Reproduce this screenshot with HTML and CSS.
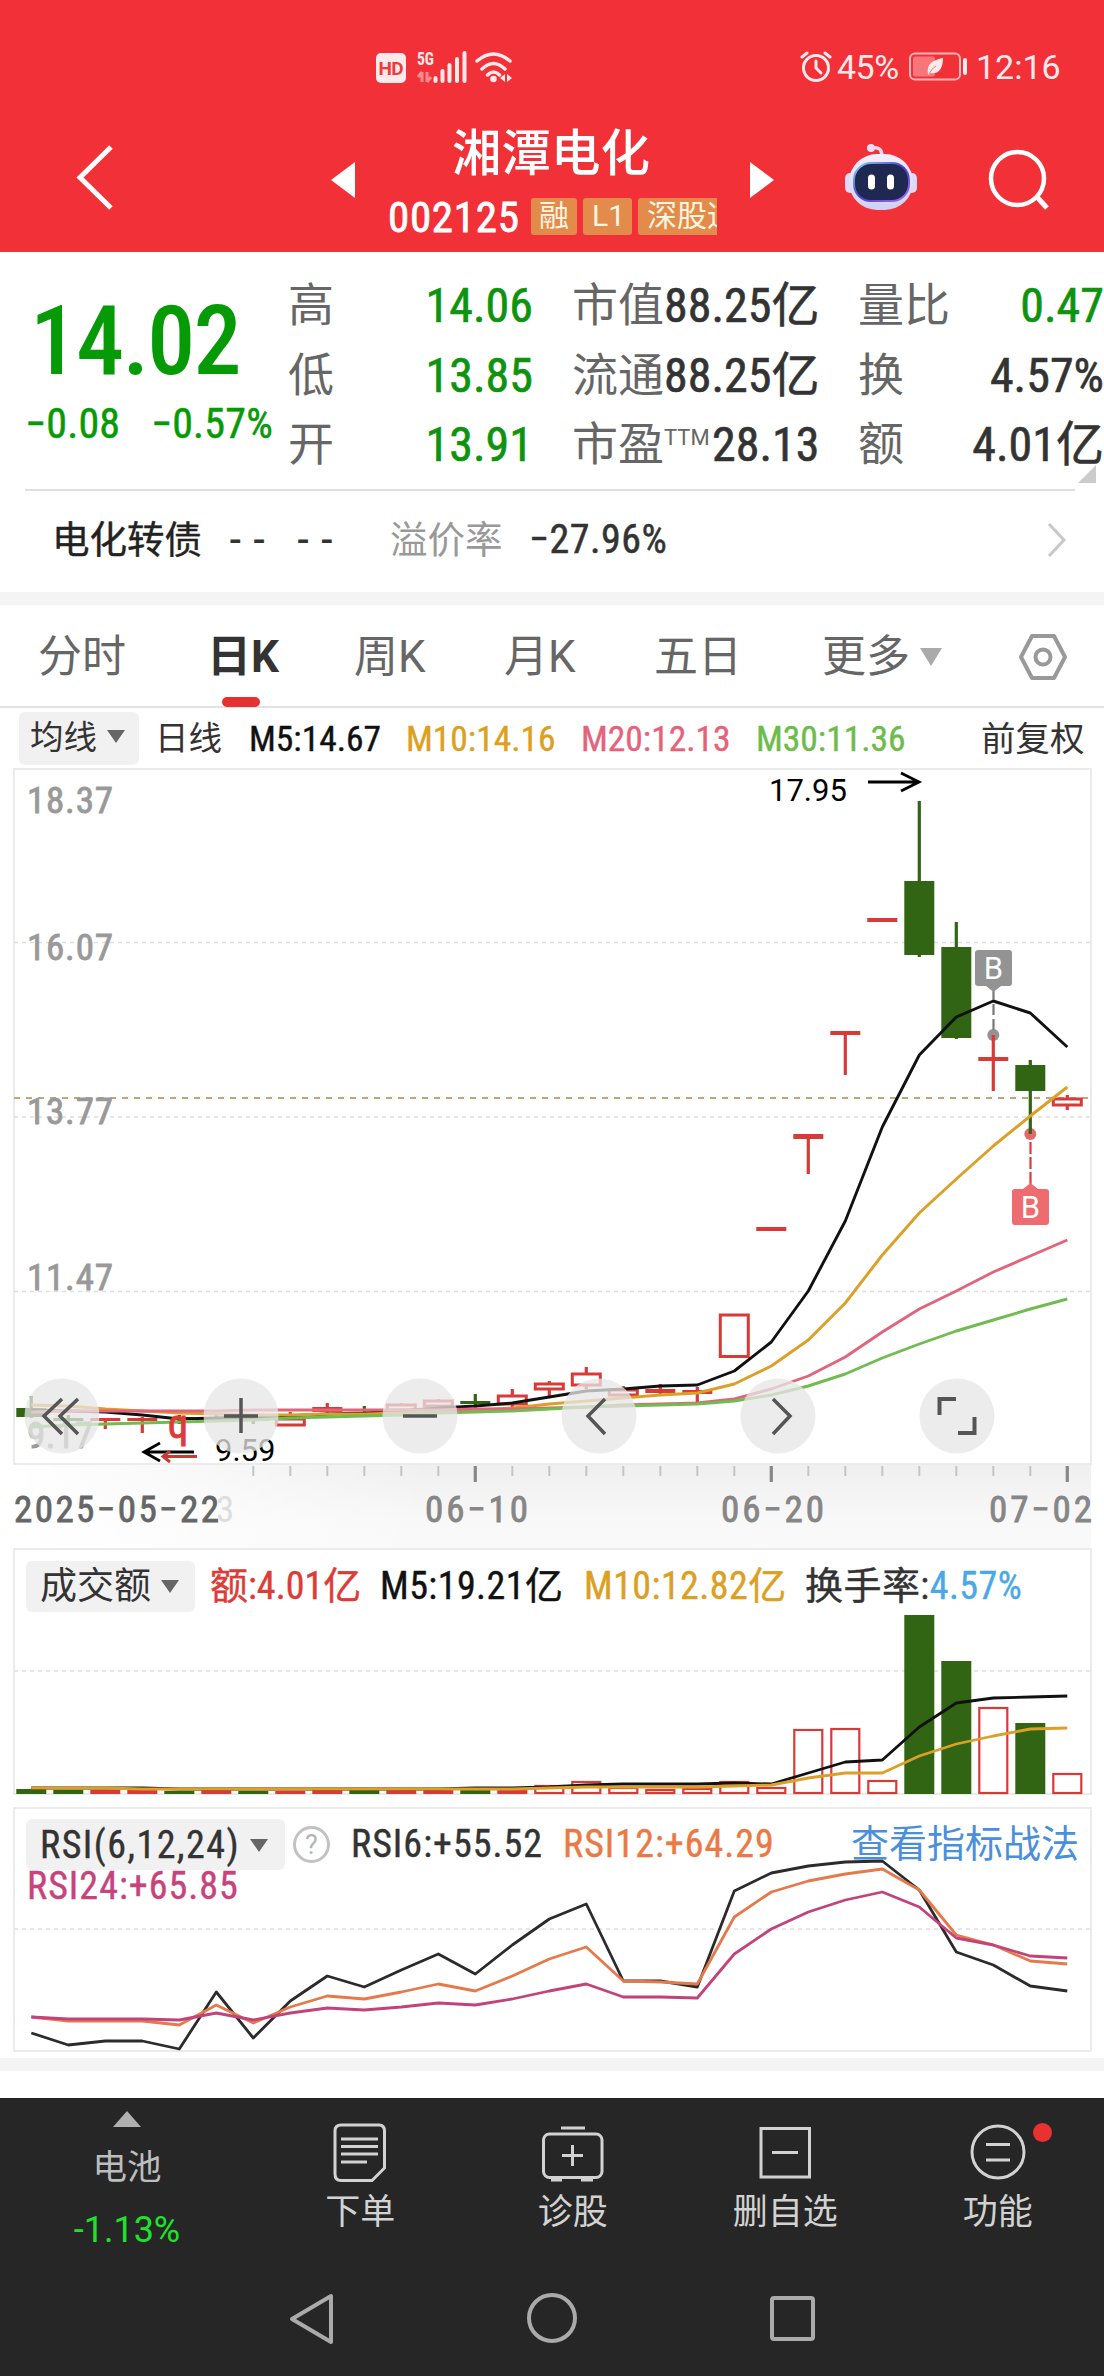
FILE: index.html
```html
<!DOCTYPE html>
<html lang="zh-CN">
<head>
    <meta charset="UTF-8" />
    <meta name="viewport" content="width=device-width, initial-scale=1.0" />
    <title>湘潭电化 002125</title>
    <link rel="stylesheet" href="styles.css">
</head>
<body>
    <div class="app">
        <header class="top">
            <div class="status-bar">
                <svg class="status-left" width="150" height="40" viewBox="370 47 150 40">
                    <rect x="376" y="53" width="30" height="30" rx="5" fill="#ffe9ea"/>
                    <text x="391" y="75" font-size="19" font-weight="700" text-anchor="middle" textLength="25" fill="#ee3a40">HD</text>
                    <text class="cond" x="417" y="65" font-size="19" font-weight="700" fill="#ffe9ea" textLength="17" lengthAdjust="spacingAndGlyphs">5G</text>
                    <path d="M422 72v10M418 77l4-5M427 72v10M427 82l4-5" stroke="#f98a8e" stroke-width="3" fill="none"/>
                    <path d="M435.500 78v3M442.500 71v10M449.500 65v16M457 59v22M464.500 53v28" stroke="#ffe9ea" stroke-width="4" stroke-linecap="round"/>
                    <path d="M477 61q16.500 -14 33 0M482 69q11.500 -11 23 0M487.500 75q6 -6 12 0" stroke="#ffe9ea" stroke-width="3.500" fill="none" stroke-linecap="round"/>
                    <circle cx="493.500" cy="79" r="3.300" fill="#ffe9ea"/>
                    <path d="M505 74v8l-5-4zM507 74v8l5-4z" fill="#ffe9ea"/>
                </svg>
                <div class="status-right">
                    <svg width="32" height="32" viewBox="0 0 32 32" fill="none" stroke="#ffe9ea" stroke-linecap="round">
                        <circle cx="16" cy="17" r="12.500" stroke-width="3"/>
                        <path d="M16 10v7l5 5" stroke-width="3"/>
                        <path d="M2 6l5-4M30 6l-5-4" stroke-width="3"/>
                    </svg>
                    <span class="battery-text">45%</span>
                    <svg class="battery" width="60" height="30" viewBox="0 0 60 30">
                        <rect x="1" y="1.500" width="50" height="26" rx="5" fill="none" stroke="#fbb5b8" stroke-width="2"/>
                        <rect x="4" y="4.500" width="22" height="20" rx="2" fill="#f7767b"/>
                        <path d="M19 22c-2-10 5-14 15-16c0 10-4 17-13 15l-1 2z" fill="#ffe9ea"/>
                        <path d="M20 22q3-6 7-8" stroke="#f7767b" fill="none"/>
                        <rect x="54" y="6" width="4" height="17" rx="2" fill="#ffe9ea"/>
                    </svg>
                    <span class="clock">12:16</span>
                </div>
            </div>
            <div class="title-bar">
                <svg class="back" width="40" height="70" viewBox="75 143 40 70"><path d="M111 147L80 177.500L111 208" fill="none" stroke="#fff" stroke-width="5"/></svg>
                <svg class="prev" width="24" height="36" viewBox="0 0 24 36"><path d="M0 18L24 0V36z" fill="#fff"/></svg>
                <div class="stock">
                    <h1 class="stock-name">湘潭电化</h1>
                    <div class="stock-line">
                        <span class="stock-code">002125</span>
                        <span class="tag">融</span>
                        <span class="tag tag-l1">L1</span>
                        <span class="tag tag-cut">深股通</span>
                    </div>
                </div>
                <svg class="next" width="24" height="36" viewBox="0 0 24 36"><path d="M24 18L0 0V36z" fill="#fff"/></svg>
                <svg class="robot" width="76" height="72" viewBox="842 140 76 72">
                    <defs>
                        <linearGradient id="shell" x1="0" y1="0" x2="0" y2="1"><stop offset="0" stop-color="#f4effd"/><stop offset="1" stop-color="#cfd0f3"/></linearGradient>
                        <linearGradient id="rim" x1="0" y1="0" x2="1" y2="1"><stop offset="0" stop-color="#7fd5f5"/><stop offset=".5" stop-color="#4c3cc8"/><stop offset="1" stop-color="#a56cf0"/></linearGradient>
                    </defs>
                    <path d="M871 148q10-2 10 8" fill="none" stroke="#e4d5f2" stroke-width="3.500"/>
                    <circle cx="870" cy="148" r="4" fill="#e9dcf6"/>
                    <rect x="844" y="173" width="10" height="20" rx="5" fill="#dcd8f6"/>
                    <rect x="906" y="173" width="10" height="20" rx="5" fill="#dcd8f6"/>
                    <rect x="848" y="154" width="64" height="56" rx="28" fill="url(#shell)"/>
                    <rect x="853" y="163" width="55" height="38" rx="17" fill="#1f2850" stroke="url(#rim)" stroke-width="2"/>
                    <rect x="867" y="174.500" width="7" height="15" rx="3.500" fill="#fff"/>
                    <rect x="886" y="174.500" width="7" height="15" rx="3.500" fill="#fff"/>
                </svg>
                <svg class="search" width="64" height="64" viewBox="986 148 64 64" fill="none" stroke="#fff"><circle cx="1016.500" cy="178.500" r="26.500" stroke-width="4.500"/><path d="M1036 197L1046 208" stroke-width="5"/></svg>
            </div>
        </header>

        <section class="quote">
            <div class="quote-main">
                <div class="price">14.02</div>
                <div class="change"><span>−0.08</span><span>−0.57%</span></div>
            </div>
            <dl class="quote-col col-price">
                <dt>高</dt><dd class="down">14.06</dd>
                <dt>低</dt><dd class="down">13.85</dd>
                <dt>开</dt><dd class="down">13.91</dd>
            </dl>
            <dl class="quote-col col-value">
                <dt>市值</dt><dd>88.25亿</dd>
                <dt>流通</dt><dd>88.25亿</dd>
                <dt>市盈<sup>TTM</sup></dt><dd>28.13</dd>
            </dl>
            <dl class="quote-col col-ratio">
                <dt>量比</dt><dd class="down">0.47</dd>
                <dt>换</dt><dd>4.57%</dd>
                <dt>额</dt><dd>4.01亿</dd>
            </dl>
            <i class="corner"></i>
        </section>

        <section class="bond">
            <span class="bond-name">电化转债</span>
            <span class="bond-dash">-- --</span>
            <span class="bond-label">溢价率</span>
            <span class="bond-value">−27.96%</span>
            <svg width="22" height="36" viewBox="0 0 22 36"><path d="M3 2L18 18L3 34" fill="none" stroke="#c8c8c8" stroke-width="3"/></svg>
        </section>

        <nav class="tabs">
            <span class="tab">分时</span>
            <span class="tab active">日K</span>
            <span class="tab">周K</span>
            <span class="tab">月K</span>
            <span class="tab">五日</span>
            <span class="tab">更多<i class="caret caret-light"></i></span>
            <svg class="setting" width="50" height="48" viewBox="0 0 50 48" fill="none" stroke="#999" stroke-width="4" stroke-linejoin="round"><path d="M14 3H36L47 24L36 45H14L3 24z"/><circle cx="25" cy="24" r="7.500"/></svg>
        </nav>

        <div class="ma-row">
            <span class="pill pill-ma">均线<i class="caret"></i></span>
            <span class="ma-cycle">日线</span>
            <span class="num c-black">M5:14.67</span>
            <span class="num c-gold">M10:14.16</span>
            <span class="num c-pink">M20:12.13</span>
            <span class="num c-green">M30:11.36</span>
            <span class="ma-right">前复权</span>
        </div>

        <svg class="chart" id="kline" width="1104" height="781" viewBox="0 766 1104 781">
            <defs>
                <linearGradient id="fade" x1="0" y1="0" x2="0" y2="1"><stop offset="0" stop-color="#efefef"/><stop offset=".6" stop-color="#f8f8f8"/><stop offset="1" stop-color="#fafafa"/></linearGradient>
                <linearGradient id="fadeLeft" x1="0" y1="0" x2="1" y2="0"><stop offset="0" stop-color="#fff"/><stop offset="1" stop-color="#fff" stop-opacity="0"/></linearGradient>
            </defs>
            <rect x="13" y="1464" width="1078" height="90" fill="url(#fade)"/>
            <rect x="12" y="1464" width="420" height="90" fill="url(#fadeLeft)"/>
            <rect x="14" y="768" width="1077" height="695" fill="#fff" stroke="#ebebeb" stroke-width="2"/>
            <path d="M14 941.500H1090M14 1116H1090M14 1290.500H1090" stroke="#dedede" stroke-width="1.500" stroke-dasharray="4 4"/>
            <path d="M14 1097H1090" stroke="#bfa77c" stroke-width="2" stroke-dasharray="6 6"/>
            <g class="cond axis-y" font-size="37">
                <text x="27" y="812" textLength="86">18.37</text>
                <text x="27" y="959" textLength="86">16.07</text>
                <text x="27" y="1123" textLength="86">13.77</text>
                <text x="27" y="1289" textLength="86">11.47</text>
                <text x="27" y="1447" textLength="66">9.17</text>
            </g>
            <g id="candles"></g>
            <g id="kLines"></g>
            <g id="marks" font-size="31">
                <text x="769" y="800">17.95</text>
                <path d="M868 781H919M901 772L919 781L901 790" fill="none" stroke="#000" stroke-width="2.800"/>
                <text class="cond" x="168" y="1437" font-size="40" fill="#dd3b38" stroke="#dd3b38">q</text>
                <path d="M194 1451H144M160 1442L144 1451L160 1460" fill="none" stroke="#000" stroke-width="2.800"/>
                <path d="M197 1455.500H163M170 1450L163 1455.500L170 1461" fill="none" stroke="#c93a35" stroke-width="3"/>
                <text x="215" y="1460">9.59</text>

                <path d="M993.500 988V1031" stroke="#777" stroke-width="2.200" stroke-dasharray="11 4"/>
                <path d="M978 949h31q3 0 3 3v30q0 3-3 3h-8l-7.500 6l-7.500-6h-8q-3 0-3-3v-30q0-3 3-3z" fill="#939393"/>
                <text x="993.500" y="978" text-anchor="middle" fill="#fff">B</text>
                <path d="M1030.500 1141V1184" stroke="#dd3b38" stroke-width="2.200" stroke-dasharray="12 3"/>
                <path d="M1015 1188h8l7.500-6l7.500 6h8q3 0 3 3v30q0 3-3 3h-31q-3 0-3-3v-30q0-3 3-3z" fill="#ee6b6f"/>
                <text x="1030.500" y="1217" text-anchor="middle" fill="#fff">B</text>
            </g>
            <g fill="#e6e6e6" fill-opacity=".76">
                <circle cx="62" cy="1415" r="37.500"/><circle cx="241" cy="1415" r="37.500"/><circle cx="420" cy="1415" r="37.500"/>
                <circle cx="599" cy="1415" r="37.500"/><circle cx="778" cy="1415" r="37.500"/><circle cx="957" cy="1415" r="37.500"/>
            </g>
            <g fill="none" stroke="#555" stroke-width="3.500">
                <path d="M62 1398L44 1415L62 1433M78 1398L60 1415L78 1433"/>
                <path d="M224 1415H258M241 1397V1432M403 1415H437"/>
                <path d="M605 1398L588 1415L605 1433M773 1398L790 1415L773 1433"/>
                <path d="M939.500 1414V1398H956M974.500 1416V1432H958" stroke-width="4"/>
            </g>
            <g id="ticks"></g>
            <g class="cond axis-x" font-size="37">
                <text class="ghost" x="216" y="1521">3</text>
                <text class="axis-start" x="14" y="1521" textLength="205">2025−05−22</text>
                <text x="425" y="1521" textLength="103">06−10</text>
                <text x="721" y="1521" textLength="103">06−20</text>
                <text x="989" y="1521" textLength="103">07−02</text>
            </g>
        </svg>

        <section class="panel panel-volume">
            <svg class="chart" id="volume" width="1104" height="259" viewBox="0 1547 1104 259">
                <rect x="14" y="1548" width="1077" height="245" fill="#fff" stroke="#ebebeb" stroke-width="2"/>
                <path d="M14 1670H1090" stroke="#e6e6e6" stroke-width="2" stroke-dasharray="4 4"/>
                <g id="volBars"></g>
                <g id="volLines"></g>
            </svg>
            <div class="panel-head vol-head">
                <span class="pill pill-vol">成交额<i class="caret"></i></span>
                <span class="num c-red">额:4.01亿</span>
                <span class="num c-black">M5:19.21亿</span>
                <span class="num c-gold">M10:12.82亿</span>
                <span class="num">换手率:<b class="c-blue">4.57%</b></span>
            </div>
        </section>

        <section class="panel panel-rsi">
            <svg class="chart" id="rsi" width="1104" height="251" viewBox="0 1806 1104 251">
                <rect x="14" y="1807" width="1077" height="243" fill="#fff" stroke="#ebebeb" stroke-width="2"/>
                <path d="M14 1928H1090" stroke="#e6e6e6" stroke-width="2" stroke-dasharray="4 4"/>
                <g id="rsiLines"></g>
            </svg>
            <div class="panel-head rsi-head">
                <span class="pill pill-rsi num">RSI(6,12,24)<i class="caret"></i></span>
                <span class="help">?</span>
                <span class="num">RSI6:+55.52</span>
                <span class="num c-orange">RSI12:+64.29</span>
                <span class="rsi-link">查看指标战法</span>
                <span class="num c-magenta rsi24">RSI24:+65.85</span>
            </div>
        </section>
        <div class="band"></div>

        <footer class="bottom">
            <div class="menu">
                <div class="sector">
                    <i class="up"></i>
                    <span class="sector-name">电池</span>
                    <span class="sector-rate">-1.13%</span>
                </div>
                <div class="menu-item">
                    <svg width="64" height="64" viewBox="328 2119 64 64" fill="none" stroke="#d2d2d2" stroke-width="3"><path d="M341 2124H379Q384.500 2124 384.500 2130V2167L372 2179.500H341Q335 2179.500 335 2173V2130Q335 2124 341 2124z"/><path d="M341 2138H378M341 2145.500H378M341 2153H378M341 2161H367"/></svg>
                    <span>下单</span>
                </div>
                <div class="menu-item">
                    <svg width="64" height="64" viewBox="540 2119 64 64" fill="none" stroke="#d2d2d2" stroke-width="3"><rect x="542.500" y="2133" width="58.500" height="43.500" rx="6"/><path d="M560 2127H584M561 2154.500H582M571.500 2144V2165M550 2179H561M580 2179H592"/></svg>
                    <span>诊股</span>
                </div>
                <div class="menu-item">
                    <svg width="64" height="64" viewBox="752 2119 64 64" fill="none" stroke="#d2d2d2" stroke-width="3"><rect x="760" y="2127.500" width="48.500" height="48.500"/><path d="M771 2151.500H797"/></svg>
                    <span>删自选</span>
                </div>
                <div class="menu-item">
                    <svg width="64" height="64" viewBox="965 2119 64 64" fill="none" stroke="#d2d2d2" stroke-width="3"><circle cx="997" cy="2151" r="26"/><path d="M985 2143.500H1009M985 2159H1009"/></svg>
                    <span>功能</span>
                    <i class="dot"></i>
                </div>
            </div>
            <div class="sys-nav">
                <svg width="1104" height="60" viewBox="0 2287 1104 60" fill="none" stroke="#aaa" stroke-width="4" stroke-linejoin="round"><path d="M331 2295V2341L292 2318z"/><circle cx="552" cy="2317" r="23"/><rect x="772" y="2297" width="41" height="41" rx="2"/></svg>
            </div>
        </footer>
    </div>

    <script>
        const STEP = 37;
        const X0 = 31.3;
        const RED = '#d93a37';
        const GREEN = '#316413';

        // 类型, 上影, 实体顶, 实体底, 下影
        const candles = [
            ['g', 1395, 1407, 1416, 1417], ['g', 1414, 1417, 1420, 1423], ['r', 1417, 1417, 1420, 1428],
            ['r', 1416, 1417, 1420, 1432], ['g', 1414, 1416, 1418, 1423], ['r', 1414, 1417, 1420, 1420],
            ['g', 1416, 1417, 1420, 1423], ['h', 1411, 1418, 1424, 1425], ['r', 1402, 1406, 1411, 1412],
            ['g', 1405, 1408, 1410, 1413], ['h', 1402, 1404, 1409, 1409], ['h', 1398, 1400, 1405, 1405],
            ['g', 1393, 1400, 1403, 1407], ['h', 1388, 1395, 1403, 1406], ['h', 1380, 1383, 1388, 1396],
            ['h', 1366, 1373, 1384, 1388], ['h', 1385, 1389, 1394, 1395], ['r', 1383, 1388, 1392, 1393],
            ['r', 1386, 1389, 1393, 1402], ['h', 1314, 1314, 1355.5, 1355], ['r', 1226, 1226, 1230, 1230],
            ['r', 1133, 1133, 1138, 1173], ['r', 1030, 1030, 1034, 1074], ['r', 917, 917, 921, 921],
            ['g', 800, 880, 954, 956], ['g', 921, 946, 1037, 1038], ['r', 1034, 1056, 1060, 1090],
            ['g', 1059, 1064, 1090, 1133], ['h', 1094, 1098, 1104, 1109]
        ];

        const volume = [
            'g1788', 'g1789', 'r1789', 'r1789', 'g1790', 'r1789', 'g1790', 'r1790', 'r1789', 'g1789',
            'r1789', 'r1789', 'g1789', 'r1788', 'h1785', 'h1781', 'h1787', 'h1789', 'h1788', 'h1781',
            'h1787', 'h1729', 'h1728', 'h1780', 'g1614', 'g1660', 'h1707', 'g1722', 'h1773'
        ];

        function x(i) {
            return X0 + i * STEP;
        }

        function line(values, color, width) {
            const points = values.map((v, i) => `${x(i)},${v}`).join(' ');
            return `<polyline points="${points}" fill="none" stroke="${color}" stroke-width="${width}" stroke-linejoin="round"/>`;
        }

        function box(i, type, top, bottom) {
            const c = x(i);
            if (type === 'h') {
                return `<rect x="${c - 14}" y="${top}" width="28" height="${bottom - top}" fill="#fff" stroke="${RED}" stroke-width="3"/>`;
            }
            return `<rect x="${c - 15}" y="${top}" width="30" height="${bottom - top}" fill="${type === 'g' ? GREEN : RED}"/>`;
        }

        // K线
        document.getElementById('candles').innerHTML =
            `<circle cx="${x(26)}" cy="1034" r="6" fill="#939393"/><circle cx="${x(27)}" cy="1133" r="6" fill="#e4686b"/>` +
            candles.map(([type, high, top, bottom, low], i) => {
                const color = type === 'g' ? GREEN : RED;
                return `<path d="M${x(i)} ${high}V${low}" stroke="${color}" stroke-width="3.2"/>` + box(i, type, top, bottom);
            }).join('');

        document.getElementById('kLines').innerHTML =
            line([1409, 1410, 1411, 1414, 1418, 1417, 1416, 1415, 1413, 1412, 1410, 1407, 1405, 1402, 1396, 1390, 1388, 1385, 1384, 1370, 1341, 1290, 1220, 1126, 1054, 1016, 1000, 1012, 1046], '#111', 2.9) +
            line([1404, 1405, 1408, 1410, 1412, 1413, 1414, 1414, 1413, 1413, 1412, 1411, 1409, 1407, 1403, 1400, 1397, 1394, 1392, 1383, 1365, 1339, 1302, 1254, 1212, 1178, 1145, 1115, 1086], '#dc9f28', 2.9) +
            line([1411, 1410, 1410, 1410, 1410, 1410, 1409, 1409, 1409, 1409, 1409, 1409, 1408, 1408, 1407, 1406, 1404, 1403, 1402, 1398, 1388, 1375, 1356, 1331, 1308, 1290, 1271, 1255, 1239], '#e2647b', 2.9) +
            line([1426, 1424, 1423, 1422, 1421, 1420, 1419, 1417, 1416, 1415, 1414, 1412, 1411, 1410, 1408, 1406, 1405, 1404, 1403, 1400, 1394, 1385, 1373, 1357, 1343, 1330, 1319, 1308, 1298], '#71bc50', 2.9);

        let ticks = '';
        for (let i = 6; i < 29; i++) {
            const major = i === 12 || i === 20 || i === 28;
            ticks += `<path d="M${x(i)} 1465v${major ? 16 : 10}" stroke="${major ? '#888' : '#c4c4c4'}" stroke-width="${major ? 3.2 : 2}"/>`;
        }
        document.getElementById('ticks').innerHTML = ticks;

        // 成交额
        document.getElementById('volBars').innerHTML = volume.map((v, i) => {
            const bottom = v[0] === 'h' ? 1792 : 1793;
            return box(i, v[0], Number(v.slice(1)), bottom);
        }).join('').replace(/stroke-width="3"/g, 'stroke-width="2.2"');

        document.getElementById('volLines').innerHTML =
            line([1787, 1787, 1787, 1787, 1788, 1788, 1788, 1788, 1788, 1788, 1788, 1788, 1787, 1787, 1786, 1784, 1783, 1783, 1783, 1782, 1783, 1772, 1761, 1759, 1726, 1702, 1697, 1696, 1695], '#111', 2.8) +
            line([1787, 1787, 1787, 1788, 1788, 1788, 1788, 1788, 1788, 1788, 1788, 1788, 1788, 1788, 1787, 1786, 1786, 1786, 1786, 1785, 1784, 1777, 1772, 1772, 1755, 1743, 1735, 1728, 1727], '#dc9f28', 2.8);

        // RSI
        document.getElementById('rsiLines').innerHTML =
            line([2032, 2044, 2040, 2040, 2048, 1991, 2037, 2000, 1975, 1986, 1969, 1953, 1973, 1944, 1918, 1903, 1980, 1980, 1986, 1890, 1872, 1865, 1861, 1860, 1889, 1951, 1964, 1985, 1990], '#2b2b2b', 2.8) +
            line([2016, 2020, 2020, 2020, 2024, 2004, 2022, 2006, 1995, 1998, 1991, 1983, 1990, 1975, 1958, 1946, 1980, 1981, 1983, 1916, 1891, 1880, 1873, 1868, 1889, 1934, 1944, 1960, 1963], '#e6794a', 2.8) +
            line([2016, 2018, 2018, 2018, 2019, 2012, 2019, 2012, 2007, 2009, 2006, 2002, 2004, 1998, 1990, 1983, 1996, 1996, 1997, 1953, 1928, 1911, 1899, 1891, 1906, 1937, 1944, 1955, 1957], '#c2437a', 2.8);
    </script>
</body>
</html>
```
FILE: styles.css
```css
* {
    box-sizing: border-box;
}

body {
    margin: 0;
    background: #fff;
    color: #333;
    font-family: Roboto, "Noto Sans CJK SC", sans-serif;
}

.app {
    width: 1104px;
    height: 2376px;
    display: flex;
    flex-direction: column;
    overflow: hidden;
}

svg {
    display: block;
    flex: none;
}

.num,
.cond {
    font-family: "Roboto Condensed", "Noto Sans CJK SC", sans-serif;
}

.num {
    -webkit-text-stroke: 0.4px currentColor;
}

.c-black { color: #111; }
.c-gold { color: #dd9f1f; }
.c-pink { color: #e5637a; }
.c-green { color: #6cbc4a; }
.c-red { color: #dd3b38; }
.c-blue { color: #49a9e8; font-weight: 400; }
.c-orange { color: #ea7a45; }
.c-magenta { color: #c6437c; }

/* 顶部 */
.top {
    height: 252px;
    background: #f13038;
    color: #fff;
}

.status-bar {
    height: 100px;
    padding: 34px 42px 0 370px;
    display: flex;
    justify-content: space-between;
    align-items: center;
    color: #ffe9ea;
}

.status-right {
    display: flex;
    align-items: center;
    font-size: 34px;
}

.battery-text {
    width: 64px;
    margin: 0 8px 0 5px;
    letter-spacing: -0.5px;
}

.clock {
    width: 86px;
    margin-left: 7px;
    white-space: nowrap;
}

.title-bar {
    height: 152px;
    display: flex;
    align-items: flex-start;
}

.back {
    margin: 43px 216px 0 75px;
}

.prev {
    margin-top: 62px;
}

.stock {
    width: 332px;
    margin: 24px 33px 0 30px;
}

.stock-name {
    margin: 0;
    height: 58px;
    font-size: 49.5px;
    line-height: 60px;
    font-weight: 500;
    text-align: center;
}

.stock-line {
    height: 56px;
    margin-top: 12px;
    padding-left: 3px;
    display: flex;
    align-items: flex-start;
    gap: 6px;
}

.stock-code {
    flex: none;
    width: 137px;
    font: 400 43px/46px "Roboto Condensed", sans-serif;
    letter-spacing: 0.7px;
    -webkit-text-stroke: 0.8px #fff;
}

.tag {
    flex: none;
    height: 37px;
    margin-top: 4px;
    padding: 0 8px;
    border-radius: 3px;
    background: #e38b4a;
    font-size: 30px;
    line-height: 36px;
    color: #fff6e0;
}

.tag-l1 {
    width: 49px;
    padding: 0 9px;
}

.tag-cut {
    width: 79px;
    padding: 0 0 0 9px;
    border-radius: 3px 0 0 3px;
    overflow: hidden;
    white-space: nowrap;
}

.next {
    margin-top: 62px;
}

.robot {
    margin: 40px 0 0 69px;
}

.search {
    margin: 48px 0 0 68px;
}

/* 行情 */
.quote {
    position: relative;
    height: 239px;
    margin: 0 0 0 25px;
    padding-top: 19px;
    display: flex;
}

.quote::after {
    content: "";
    position: absolute;
    left: 0;
    bottom: 0;
    width: 1050px;
    border-bottom: 2px solid #e0e0e0;
}

.quote-main {
    width: 263px;
    color: #069b06;
    font-family: "Roboto Condensed", sans-serif;
}

.price {
    height: 116px;
    padding: 18px 0 0 5px;
    font-size: 96px;
    font-weight: 500;
    line-height: 105px;
    letter-spacing: -1.8px;
}

.change {
    height: 50px;
    margin-top: 13px;
    display: flex;
    justify-content: space-between;
    width: 248px;
    font-size: 42px;
    line-height: 48px;
    letter-spacing: 0.2px;
    -webkit-text-stroke: 0.5px #069b06;
}

.quote-col {
    margin: 0;
    display: grid;
    grid-template-columns: 92px 1fr;
    grid-template-rows: repeat(3, 69.5px);
    align-items: center;
    line-height: 69px;
    white-space: nowrap;
}

.quote-col dt {
    color: #666;
    font-size: 46px;
    font-weight: 400;
}

.quote-col dd {
    margin: 0;
    font: 400 48px/69px "Roboto Condensed", "Noto Sans CJK SC", sans-serif;
    text-align: right;
    -webkit-text-stroke: 0.6px currentColor;
}

.quote-col dd.down {
    color: #0d930d;
}

.quote-col sup {
    position: relative;
    top: -15px;
    font-size: 22px;
    line-height: 0;
    vertical-align: baseline;
}

.col-price {
    width: 245px;
}

.col-value {
    width: 247px;
    margin-left: 39px;
}

.col-ratio {
    width: 246px;
    margin-left: 39px;
}

.corner {
    position: absolute;
    right: 8px;
    top: 213px;
    border-left: 18px solid transparent;
    border-bottom: 18px solid #ccc;
}

.bond {
    height: 101px;
    padding: 0 36px 4px 52px;
    display: flex;
    align-items: center;
    font-size: 37.5px;
    line-height: 50px;
}

.bond-name {
    width: 177px;
    color: #222;
    -webkit-text-stroke: 0.4px #222;
}

.bond-dash {
    width: 161px;
    font-weight: 500;
    letter-spacing: 11px;
    white-space: nowrap;
}

.bond-label {
    width: 139px;
    color: #999;
}

.bond-value {
    flex: 1;
    font-family: "Roboto Condensed", sans-serif;
    font-size: 40px;
    letter-spacing: 0.5px;
    -webkit-text-stroke: 0.5px currentColor;
}

/* 周期 */
.tabs {
    position: relative;
    height: 116px;
    padding: 2px 0 0 38px;
    border-top: 13px solid #f4f4f4;
    border-bottom: 2px solid #e2e2e2;
    display: flex;
    align-items: center;
    color: #666;
    font-size: 44px;
}

.tab {
    position: relative;
    width: 150px;
    line-height: 100px;
    white-space: nowrap;
}

.tab:nth-child(1) { width: 169px; }
.tab:nth-child(2) { width: 147px; }
.tab:nth-child(5) { width: 168px; }
.tab:nth-child(6) { width: 196px; }

.tab.active {
    color: #333;
    font-weight: 700;
}

.tab.active::after {
    content: "";
    position: absolute;
    left: 15px;
    bottom: 0;
    width: 38px;
    height: 10px;
    border-radius: 5px;
    background: #e43232;
}

.caret {
    display: inline-block;
    margin-left: 10px;
    border: 9.500px solid transparent;
    border-top: 13px solid #666;
    border-bottom: 0;
    vertical-align: 6px;
}

.caret-light {
    border-width: 11px;
    border-top: 18px solid #aaa;
    border-bottom: 0;
}

.ma-row {
    height: 59px;
    padding: 4px 0 0 19px;
    display: grid;
    grid-template-columns: 136px 94px 157px 175px 175px 225px 120px;
    align-items: start;
    font-size: 33.5px;
    line-height: 54px;
    white-space: nowrap;
}

.ma-row .num {
    font-size: 35.500px;
}

.ma-right {
    font-size: 34.5px;
}

.pill {
    height: 53px;
    border-radius: 6px;
    background: #f1f1f1;
    line-height: 52px;
}

.pill-ma {
    width: 120px;
    padding-left: 11px;
}

/* 图表 */
.axis-y {
    fill: #999;
    stroke: #999;
    stroke-width: 0.8px;
}

.axis-x {
    fill: #868686;
    stroke: #868686;
    stroke-width: 0.8px;
}

.axis-start {
    fill: #666;
    stroke: #666;
}

.ghost {
    fill: #ddd;
    stroke: none;
}

.panel {
    display: grid;
}

.panel > * {
    grid-area: 1 / 1;
}

.panel-head {
    position: relative;
    display: grid;
    align-content: start;
    padding-left: 26px;
    font-size: 37px;
    line-height: 51px;
    white-space: nowrap;
}

.panel-head .num {
    font-size: 38px;
}

.vol-head {
    padding-top: 13px;
    grid-template-columns: 184px 170px 204px 221px 230px;
}

.vol-head .num {
    letter-spacing: 0.45px;
}

.vol-head .c-red {
    letter-spacing: 0;
}

.rsi-head {
    padding-top: 12px;
    grid-template-columns: 267px 58px 212px 288px 230px;
}

.rsi-head .num {
    letter-spacing: 1px;
}

.panel-head .pill {
    height: 51px;
    padding-left: 14px;
}

.rsi-head .pill-rsi {
    letter-spacing: 1.5px;
}

.pill-vol {
    width: 169px;
}

.pill-rsi {
    width: 259px;
}

.help {
    width: 37px;
    height: 37px;
    margin-top: 7px;
    border: 3px solid #c2c2c2;
    border-radius: 50%;
    color: #b5b5b5;
    font-size: 27px;
    line-height: 32px;
    text-align: center;
}

.rsi-link {
    color: #4a8fdc;
    font-size: 38px;
}

.panel-head .rsi24 {
    grid-column: 1 / 3;
    margin-left: 1px;
    line-height: 33px;
}

.band {
    height: 13px;
    background: #f4f4f4;
}

/* 底部 */
.bottom {
    flex: 1;
    margin-top: 27px;
    background: #262626;
}

.menu {
    height: 190px;
    display: grid;
    grid-template-columns: 254px repeat(4, 212.500px);
}

.sector {
    display: flex;
    flex-direction: column;
    align-items: center;
    padding-top: 13px;
    color: #bdbdbd;
    font-size: 34.500px;
}

.up {
    border: 14px solid transparent;
    border-top: 0;
    border-bottom: 16px solid #b0b0b0;
}

.sector-name {
    margin-top: 15px;
    line-height: 50px;
}

.sector-rate {
    margin-top: 13px;
    color: #1ee32a;
    font-size: 36px;
    line-height: 50px;
}

.menu-item {
    position: relative;
    display: flex;
    flex-direction: column;
    align-items: center;
    padding-top: 22px;
    color: #d2d2d2;
    font-size: 35px;
    line-height: 52px;
}

.menu-item span {
    margin-top: 3px;
}

.dot {
    position: absolute;
    left: 141px;
    top: 25px;
    width: 19px;
    height: 19px;
    border-radius: 50%;
    background: #e83232;
}
```
